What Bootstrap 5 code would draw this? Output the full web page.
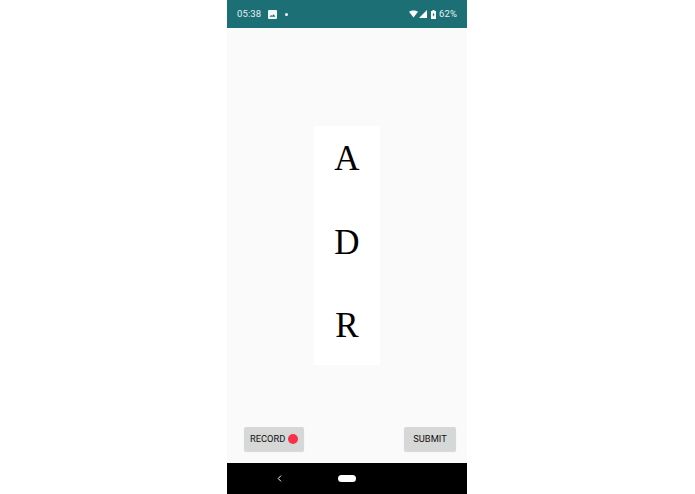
<!DOCTYPE html>
<html lang="en">
<head>
<meta charset="utf-8">
<title>Recorder</title>
<link rel="stylesheet" href="https://cdn.jsdelivr.net/npm/bootstrap@5.3.0/dist/css/bootstrap.min.css">
<style>
html,body{height:100%;background:#fff;}
body{font-family:Roboto,"Liberation Sans",sans-serif;}
.phone-frame{width:240px;height:494px;background:#fafafa;margin-left:227px;}
.status-strip{height:28px;background:#1d6f76;color:#e4f0f0;font-size:9.5px;padding:0 10px;letter-spacing:.1px;}
.status-strip svg{display:block;flex-shrink:0;}
.status-time{margin-right:7px;}
.status-dot{width:3px;height:3px;border-radius:50%;background:#f2f8f8;margin-left:8px;}
.wifi-mark{margin-right:1px;}
.signal-mark{margin-right:4px;}
.battery-mark{margin-right:3px;}
.main-area{min-height:0;}
.letter-panel{width:66px;height:239px;background:#fff;margin-top:98px;padding:0;font-family:"Liberation Serif","Times New Roman",serif;font-size:35px;line-height:1;color:#000;}
.letter-cell{height:83.5px;padding-top:15px;}
.letter-cell:last-child{height:72px;}
.action-row{padding:0 11px 12px 17px;}
.action-btn{background:#d6d7d7;border:0;border-radius:2px;height:24px;padding:0;font-size:9.3px;font-weight:400;color:#111;box-shadow:0 1px 1px rgba(0,0,0,.14);line-height:24px;}
.action-btn:hover{background:#d6d7d7;color:#111;}
.btn-rec{width:60px;padding-left:6px;}
.btn-sub{width:52px;}
.rec-dot{width:10.5px;height:10.5px;flex:0 0 10.5px;border-radius:50%;background:#f9304c;margin-left:2.5px;}
.nav-strip{height:31px;background:#000;}
.nav-inner{width:100%;padding-left:50px;}
.home-pill{width:18px;height:7px;border-radius:4px;background:#fff;margin-left:56px;}
</style>
</head>
<body>
<div class="phone-frame d-flex flex-column">
  <div class="status-strip d-flex align-items-center">
    <span class="status-time">05:38</span>
    <svg width="9" height="9" viewBox="0 0 9 9"><path fill="#f2f8f8" fill-rule="evenodd" d="M1 0h7a1 1 0 0 1 1 1v7a1 1 0 0 1-1 1H1a1 1 0 0 1-1-1V1a1 1 0 0 1 1-1zm.5 6.8h6L5.6 4.2 4.1 6 3.1 4.9z"/></svg>
    <span class="status-dot"></span>
    <span class="ms-auto d-flex align-items-center">
      <svg class="wifi-mark" width="9" height="8" viewBox="0 0 10 8"><path fill="#fff" d="M0 1.6C3-.5 7-.5 10 1.6L5 8z"/></svg>
      <svg class="signal-mark" width="8" height="8" viewBox="0 0 8 8"><path fill="#fff" d="M8 0v8H0z"/></svg>
      <svg class="battery-mark" width="5" height="9" viewBox="0 0 5 9"><path fill="#fff" fill-rule="evenodd" d="M1.5 0h2v1H5v8H0V1h1.5zM2.9 2.4 1.4 5.2h.9v1.9l1.4-2.8h-.8z"/></svg>
      <span>62%</span>
    </span>
  </div>
  <div class="main-area flex-grow-1 d-flex flex-column">
    <div class="flex-grow-1 d-flex justify-content-center align-items-start">
      <div class="letter-panel text-center">
        <div class="letter-cell">A</div>
        <div class="letter-cell">D</div>
        <div class="letter-cell">R</div>
      </div>
    </div>
    <div class="action-row d-flex justify-content-between">
      <button type="button" class="btn action-btn btn-rec d-flex align-items-center">RECORD<span class="rec-dot"></span></button>
      <button type="button" class="btn action-btn btn-sub">SUBMIT</button>
    </div>
  </div>
  <div class="nav-strip d-flex align-items-center">
    <div class="nav-inner d-flex align-items-center">
      <svg width="5" height="7" viewBox="0 0 5 7"><path fill="none" stroke="#fff" stroke-width="1" d="M4 .6 1.2 3.5 4 6.4"/></svg>
      <span class="home-pill"></span>
    </div>
  </div>
</div>
</body>
</html>
